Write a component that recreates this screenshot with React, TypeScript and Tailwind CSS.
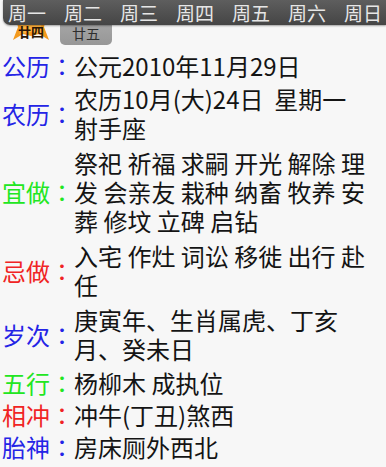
import React from "react";

const WEEK = ["周一", "周二", "周三", "周四", "周五", "周六", "周日"];

type Row = { label: string; color: string; multi?: boolean; lines: string[] };

const ROWS: Row[] = [
  { label: "公历", color: "text-[#2424e6]", lines: ["公元2010年11月29日"] },
  { label: "农历", color: "text-[#2424e6]", multi: true, lines: ["农历10月(大)24日\u00a0\u00a0星期一", "射手座"] },
  { label: "宜做", color: "text-[#22e622]", multi: true, lines: ["祭祀 祈福 求嗣 开光 解除 理发 会亲友 栽种 纳畜 牧养 安葬 修坟 立碑 启钻"] },
  { label: "忌做", color: "text-[#f02424]", multi: true, lines: ["入宅 作灶 词讼 移徙 出行 赴任"] },
  { label: "岁次", color: "text-[#2424e6]", multi: true, lines: ["庚寅年、生肖属虎、丁亥月、癸未日"] },
  { label: "五行", color: "text-[#22e622]", lines: ["杨柳木 成执位"] },
  { label: "相冲", color: "text-[#f02424]", lines: ["冲牛(丁丑)煞西"] },
  { label: "胎神", color: "text-[#2424e6]", lines: ["房床厕外西北"] },
];

function WeekBar() {
  return (
    <div className="relative z-10 ml-[3px] flex h-[25px] items-center gap-[18px] rounded-bl-[7px] bg-gradient-to-b from-[#5e5e5e] to-[#454545] pl-[5px] text-[19px] leading-none text-[#e6e6e6] shadow-[0_1px_2px_rgba(0,0,0,0.35)]">
      {WEEK.map((d) => (
        <span key={d} className="w-[38px] whitespace-nowrap">
          {d}
        </span>
      ))}
    </div>
  );
}

function DayTabs() {
  return (
    <div className="-mt-[6px] flex items-start pl-[13px]">
      <div className="relative flex h-[21px] w-[36px] items-end justify-center pb-[2px]">
        <svg className="absolute inset-0" width="36" height="21" viewBox="0 0 36 21">
          <path
            d="M3 0 L33 0 L31 8 L36 21 L26 15 L18 17 L10 15 L0 21 L5 8 Z"
            fill="#f39a1e"
          />
          <path d="M7 2 L29 2 L28 9 L30 15 L18 13 L6 15 L8 9 Z" fill="#ffb13d" />
        </svg>
        <span className="relative text-[13px] leading-none font-bold text-[#2a1606]">廿四</span>
      </div>
      <div className="ml-[11px] flex h-[26px] w-[52px] items-end justify-center rounded-b-[5px] bg-gradient-to-b from-[#a8a8a8] to-[#979797] pb-[5px]">
        <span className="text-[14px] leading-none text-[#2e2e2e]">廿五</span>
      </div>
    </div>
  );
}

export default function App() {
  return (
    <div
      lang="zh-CN"
      className="h-[467px] w-[386px] overflow-hidden bg-[#f7f7f7]"
      style={{ fontFamily: '"Noto Sans CJK SC", "Noto Sans", sans-serif' }}
    >
      <div className="h-[49px]">
        <WeekBar />
        <DayTabs />
      </div>
      <div className="flex flex-col">
        {ROWS.map((r) => (
          <div key={r.label} className="flex min-h-[32px] items-center pl-[2px]">
            <div className={`flex w-[72px] shrink-0 text-[24px] leading-[29px] ${r.color}`}>
              <span>{r.label}</span>
              <span className="w-[22px] text-center [font-family:'Noto_Sans_CJK_TC',sans-serif]">：</span>
            </div>
            <div
              className={`min-w-0 flex-1 pr-[4px] text-[24px] leading-[29px] text-[#141414] ${
                r.multi ? "py-[3px]" : "py-[1.5px]"
              }`}
            >
              {r.lines.map((l, i) => (
                <div key={i}>{l}</div>
              ))}
            </div>
          </div>
        ))}
      </div>
    </div>
  );
}
